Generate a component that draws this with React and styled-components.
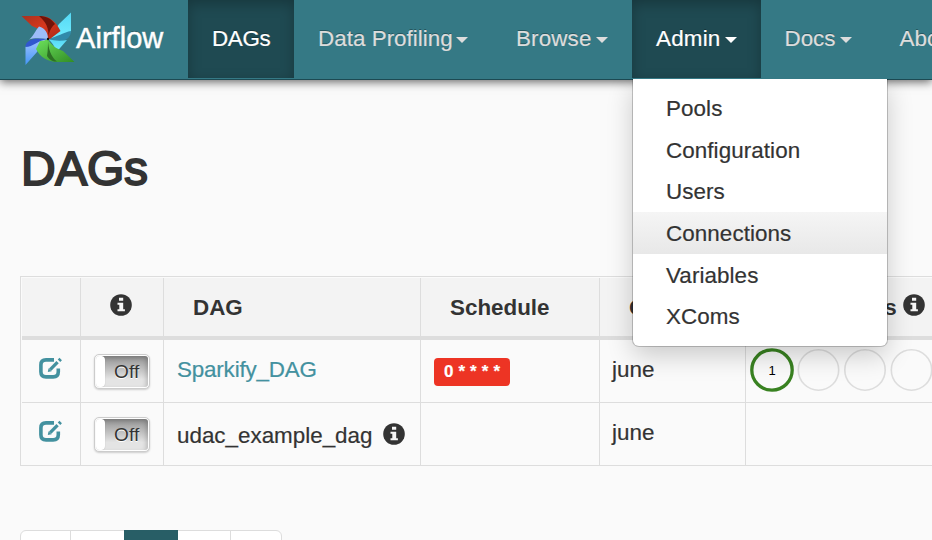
import React from "react";
import styled, { createGlobalStyle, css } from "styled-components";

const GlobalStyle = createGlobalStyle`
  * { box-sizing: border-box; }
  html, body { margin: 0; overflow: hidden; }
  body {
    background: #fafafa;
    color: #333;
    font-family: "Liberation Sans", Arial, sans-serif;
    font-size: 22.4px;
    line-height: 30px;
    -webkit-text-stroke: 0.2px currentColor;
  }
`;

const Page = styled.div`
  width: 932px;
  height: 540px;
  overflow: hidden;
`;

const Navbar = styled.header`
  position: relative;
  z-index: 2;
  display: flex;
  align-items: flex-start;
  height: 80px;
  background: #357985;
  border-bottom: 1px solid #1d4a53;
  box-shadow: 0 2px 9px rgba(0, 0, 0, 0.6);
`;

const Brand = styled.a`
  display: flex;
  flex: none;
  width: 188px;
  height: 78px;
  padding-left: 20px;
  color: #fff;
  font-size: 29px;
  line-height: 76px;
  letter-spacing: 0.05px;
  text-shadow: 0 -1px 0 rgba(0, 0, 0, 0.3);
  -webkit-text-stroke: 0.45px #fff;
  svg { flex: none; margin: 11px 0 0 0; }
`;

const NavItem = styled.div`
  position: relative;
  flex: none;
  width: ${(p) => p.$width}px;
  height: 78px;
`;

const NavLink = styled.a`
  display: flex;
  align-items: center;
  height: 78px;
  padding: 0 0 1px 24px;
  color: #ddd;
  letter-spacing: ${(p) => p.$tracking || 0}px;
  white-space: nowrap;
  text-shadow: 0 -1px 0 rgba(0, 0, 0, 0.3);
  ${(p) =>
    p.$active &&
    css`
      color: #fff;
      background: #1f4a52;
      box-shadow: inset 0 4px 13px rgba(0, 0, 0, 0.25);
    `}
`;

const Caret = styled.span`
  margin: 3px 24px 0 auto;
  border: 6.5px solid transparent;
  border-top-color: currentColor;
  border-bottom: 0;
`;

const Menu = styled.ul`
  position: absolute;
  top: 79px;
  left: 1px;
  width: 254px;
  height: 267px;
  margin: 0;
  padding: 8px 0 0;
  list-style: none;
  background: #fff;
  border-radius: 0 0 6px 6px;
  box-shadow: 0 0 0 1px rgba(0, 0, 0, 0.2), 0 9px 27px rgba(0, 0, 0, 0.2);
  clip-path: inset(0 -40px -50px -40px);
`;

const MenuItem = styled.li`
  height: 41.7px;
  padding-left: 33px;
  line-height: 44px;
  letter-spacing: 0.08px;
  background: ${(p) => (p.$hover ? "linear-gradient(#f5f5f5, #e8e8e8)" : "none")};
`;

const Main = styled.main`
  padding-left: 20px;
`;

const Title = styled.h1`
  height: 60px;
  margin: 58px 0 78px;
  padding-left: 1px;
  font-size: 48px;
  font-weight: 400;
  line-height: 62px;
  letter-spacing: -0.3px;
  -webkit-text-stroke: 1.9px #333;
`;

const Table = styled.section`
  width: 1100px;
  border: 1px solid #ddd;
  padding: 1px 0 0 1px;
`;

const columns = "58px 83px 257px 179px 146px 1fr";

const Row = styled.div`
  display: grid;
  grid-template-columns: ${columns};
  height: ${(p) => (p.$last ? 62 : 63)}px;
  border-bottom: ${(p) => (p.$last ? 0 : 1)}px solid #ddd;
`;

const HeadRow = styled(Row)`
  height: 62px;
  background: #f3f3f3;
  border-bottom: 4px solid #ddd;
  font-weight: 700;
  -webkit-text-stroke: 0;
`;

const Cell = styled.div`
  display: flex;
  align-items: flex-start;
  min-width: 0;
  padding: ${(p) => p.$top ?? 0}px 0 0 ${(p) => p.$left ?? 0}px;
  white-space: nowrap;
  & + & { border-left: 1px solid #ddd; }
`;

const DagLink = styled.a`
  color: #43919f;
  letter-spacing: -0.17px;
`;

const Toggle = styled.div`
  display: flex;
  width: 56px;
  height: 35px;
  padding: 1px;
  background: #fff;
  border: 1px solid #ccc;
  border-radius: 5px;
  box-shadow: 0 1px 2px rgba(0, 0, 0, 0.18);
`;

const ToggleHandle = styled.span`
  width: 9px;
  height: 31px;
  margin-right: -3px;
  background: #fff;
  border-radius: 4px;
  box-shadow: 0 0 1px rgba(0, 0, 0, 0.25);
  z-index: 1;
`;

const ToggleTrack = styled.span`
  flex: 1;
  padding-left: 12px;
  background: linear-gradient(#929292, #e4e4e4 75%);
  border-radius: 0 3px 3px 0;
  box-shadow: inset -2px 2px 4px rgba(0, 0, 0, 0.18);
  font-size: 19px;
  line-height: 32px;
  letter-spacing: 0.2px;
  text-shadow: 0 1px 0 #fff;
  -webkit-text-stroke: 0;
`;

const ScheduleBadge = styled.span`
  width: 76px;
  height: 28px;
  padding-left: 10px;
  background: #ed3424;
  border-radius: 4px;
  color: #fff;
  font-size: 17px;
  font-weight: 700;
  line-height: 27px;
  letter-spacing: 0.15px;
`;

const IconSlot = styled.span`
  display: flex;
  margin: ${(p) => p.$top ?? 0}px 0 0 ${(p) => p.$left ?? 0}px;
`;

const Pagination = styled.nav`
  display: flex;
  width: 262px;
  height: 50px;
  margin-top: 64px;
  background: #fff;
  border: 1px solid #ddd;
  border-radius: 6px;
`;

const PageButton = styled.a`
  width: ${(p) => p.$width}px;
  border-left: ${(p) => (p.$line ? 1 : 0)}px solid #ddd;
  ${(p) => p.$active && "margin-top: -1px; background: #285e66;"}
`;

const Pinwheel = () => (
  <svg width="56" height="56" viewBox="0 0 56 56">
    <defs>
      <linearGradient id="red" x1="0" y1="0" x2="1" y2="1">
        <stop offset="0" stopColor="#a8321f" /><stop offset=".5" stopColor="#d8371d" /><stop offset="1" stopColor="#a72815" />
      </linearGradient>
      <linearGradient id="cyan" x1="0" y1="0" x2="0" y2="1">
        <stop offset="0" stopColor="#55d8f4" /><stop offset="1" stopColor="#72edff" />
      </linearGradient>
      <linearGradient id="green" x1="0" y1="0" x2="1" y2="1">
        <stop offset="0" stopColor="#6de25c" /><stop offset="1" stopColor="#328d25" />
      </linearGradient>
      <linearGradient id="blue" x1="0" y1="0" x2="0" y2="1">
        <stop offset="0" stopColor="#a4c4ff" /><stop offset="1" stopColor="#4496f7" />
      </linearGradient>
    </defs>
    <path d="M51 1.500V21C46 25 38 27 28 28L39 13Z" fill="url(#cyan)" />
    <path d="M28 28C37 26 44 21 51 20C51 25 48 29 41 30C36 30 32 29 28 28Z" fill="#318aaa" />
    <path d="M28 28C35 30 41 30 47 29L37 40.500C34 35 32 31 28 28Z" fill="url(#cyan)" />
    <path d="M1.500 5H20C30 5 36 11 40.500 20L30 28H28C25 22 18 17 12 15Z" fill="url(#red)" />
    <path d="M19 5C25 5 31 7 35 13C31 16 29 21 28 28C30 17 25 10 19 5Z" fill="#711409" />
    <path d="M5.500 54V36C9 31 19 28 28 28C21 31 20 36 17 41Z" fill="url(#blue)" />
    <path d="M5.500 36C5 29 15 26 28 28C18 29 13 36 5.500 36Z" fill="#3157cf" />
    <path d="M19 15.500C25 17 28 22 28 28C20 27 13 27 9 28.500C13 26 15 20 19 15.500Z" fill="#9dbdf8" />
    <path d="M16 38L20 30Q25 30 28 28C31 35 38 38 43 40L54.500 51H37C28 51 20 46 16 38Z" fill="url(#green)" />
    <path d="M28 28C28 38 31 46 37 50.500C32 51 29 48 27 45C28 39 28 34 28 28Z" fill="#2d7025" />
    <circle cx="28" cy="28" r="1.200" fill="#111" />
  </svg>
);

const InfoIcon = () => (
  <svg width="22" height="22" viewBox="0 0 22 22">
    <circle cx="11" cy="11" r="10.800" fill="#333" />
    <path d="M9 3.700h4.200v3H9zM7.500 8.700h5.700v6.500h1.700v2H7.500v-2h1.800v-4.500H7.500z" fill="#f6f6f6" />
  </svg>
);

const EditIcon = () => (
  <svg width="24" height="23" viewBox="0 0 24 23" fill="none" stroke="#43919f">
    <path d="M15 2.900H7Q1.900 2.900 1.900 7.900V14.800Q1.900 19.900 7 19.900H14.200Q19.300 19.900 19.300 14.800V11.500" strokeWidth="3.600" />
    <path d="M11.200 12.600L18.600 5.200" strokeWidth="3.300" />
    <path d="M8.800 15L9.600 11.200L12.600 14.200Z" fill="#43919f" stroke="none" />
    <path d="M20 3.800L21.700 2.100" strokeWidth="3.500" />
  </svg>
);

const Runs = () => (
  <svg width="240" height="46" viewBox="0 0 240 46">
    <circle cx="23" cy="23" r="20.200" fill="none" stroke="#398221" strokeWidth="3.300" />
    <text x="23" y="27.700" fontSize="13" textAnchor="middle" fill="#000">1</text>
    {[69.5, 116, 162.5, 209].map((x) => (
      <circle key={x} cx={x} cy="23" r="20.200" fill="none" stroke="#ddd" strokeWidth="1.600" />
    ))}
  </svg>
);

const adminLinks = ["Pools", "Configuration", "Users", "Connections", "Variables", "XComs"];

const navItems = [
  { label: "DAGs", width: 106, active: true, tracking: -0.3 },
  { label: "Data Profiling", width: 198, caret: true, tracking: 0.03 },
  { label: "Browse", width: 140, caret: true, tracking: 0.15 },
  { label: "Admin", width: 128.500, caret: true, active: true, tracking: 0.2, menu: adminLinks },
  { label: "Docs", width: 115, caret: true },
  { label: "About", width: 110 },
];

const rows = [
  { name: "Sparkify_DAG", link: true, schedule: "0 * * * *", runs: true },
  { name: "udac_example_dag" },
];

export default function App() {
  return (
    <Page>
      <GlobalStyle />
      <Navbar>
        <Brand><Pinwheel />Airflow</Brand>
        {navItems.map((item) => (
          <NavItem key={item.label} $width={item.width}>
            <NavLink $active={item.active} $tracking={item.tracking}>
              {item.label}
              {item.caret && <Caret />}
            </NavLink>
            {item.menu && (
              <Menu>
                {item.menu.map((m) => (
                  <MenuItem key={m} $hover={m === "Connections"}>{m}</MenuItem>
                ))}
              </Menu>
            )}
          </NavItem>
        ))}
      </Navbar>
      <Main>
        <Title>DAGs</Title>
        <Table>
          <HeadRow>
            <Cell />
            <Cell $left={29} $top={16}><InfoIcon /></Cell>
            <Cell $left={29} $top={15}>DAG</Cell>
            <Cell $left={29} $top={15}>Schedule</Cell>
            <Cell $left={29} $top={15}>Owner</Cell>
            <Cell $left={8} $top={15}>
              Recent Tasks
              <IconSlot $left={6} $top={1}><InfoIcon /></IconSlot>
            </Cell>
          </HeadRow>
          {rows.map((row, i) => (
            <Row key={row.name} $last={i === rows.length - 1}>
              <Cell $left={17} $top={17}><EditIcon /></Cell>
              <Cell $left={13} $top={14}>
                <Toggle><ToggleHandle /><ToggleTrack>Off</ToggleTrack></Toggle>
              </Cell>
              <Cell $left={13} $top={row.link ? 15 : 18}>
                {row.link ? <DagLink>{row.name}</DagLink> : (
                  <>{row.name}<IconSlot $left={11} $top={2}><InfoIcon /></IconSlot></>
                )}
              </Cell>
              <Cell $left={13} $top={18}>
                {row.schedule && <ScheduleBadge>{row.schedule}</ScheduleBadge>}
              </Cell>
              <Cell $left={12} $top={15}>june</Cell>
              <Cell $left={3} $top={7}>{row.runs && <Runs />}</Cell>
            </Row>
          ))}
        </Table>
        <Pagination>
          <PageButton $width={49} />
          <PageButton $width={54} $line />
          <PageButton $width={54} $active />
          <PageButton $width={52} />
          <PageButton $width={51} $line />
        </Pagination>
      </Main>
    </Page>
  );
}
